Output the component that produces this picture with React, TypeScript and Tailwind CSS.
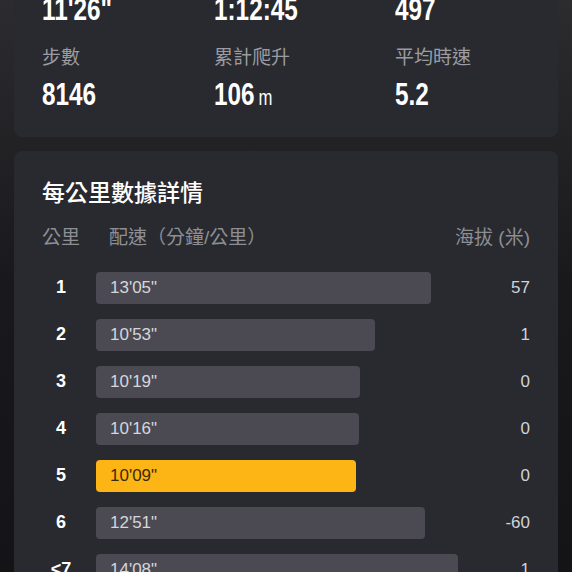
import React from "react";

const cjk = "font-['Liberation_Sans','Noto_Sans_CJK_TC',sans-serif]";
// no condensed face installed, so squeeze Liberation Sans bold
const big = "inline-block origin-left scale-x-[0.76] text-[32px] font-bold leading-none font-['Liberation_Sans',sans-serif]";

const summaryTop = ["11'26\"", "1:12:45", "497"];

const summary = [
  { label: "步數", value: "8146" },
  { label: "累計爬升", value: "106", unit: "m" },
  { label: "平均時速", value: "5.2" },
];

const rows = [
  { km: "1", pace: "13'05\"", sec: 785, alt: "57" },
  { km: "2", pace: "10'53\"", sec: 653, alt: "1" },
  { km: "3", pace: "10'19\"", sec: 619, alt: "0" },
  { km: "4", pace: "10'16\"", sec: 616, alt: "0" },
  { km: "5", pace: "10'09\"", sec: 609, alt: "0", best: true },
  { km: "6", pace: "12'51\"", sec: 771, alt: "-60" },
  { km: "<7", pace: "14'08\"", sec: 848, alt: "1" },
];

export default function App() {
  return (
    <div className="h-[572px] w-[572px] overflow-hidden bg-gradient-to-b from-[#2c2c2e] via-[#19191b] to-[#141416] px-[14px]">
      {/* summary card */}
      <div className="mt-[-27px] rounded-[8px] bg-[#282a30] pb-[26px] pl-[28px] pr-[28px] pt-[20px]">
        <div className="grid grid-cols-[172px_181px_1fr] text-white">
          {summaryTop.map((v) => (
            <div key={v}>
              <span className={big}>{v}</span>
            </div>
          ))}
        </div>
        <div className={`mt-[19px] grid grid-cols-[172px_181px_1fr] text-[19px] leading-[26px] text-[#9b9ca1] ${cjk}`}>
          {summary.map((s) => (
            <div key={s.label}>{s.label}</div>
          ))}
        </div>
        <div className="mt-[7px] grid grid-cols-[172px_181px_1fr] text-white">
          {summary.map((s) => (
            <div key={s.label}>
              <span className={big}>
                {s.value}
                {s.unit && <span className="ml-[5px] text-[22px] font-normal">{s.unit}</span>}
              </span>
            </div>
          ))}
        </div>
      </div>

      {/* per km card */}
      <div className="mt-[14px] rounded-[8px] bg-[#282a30] pl-[28px] pr-[28px] pt-[27px]">
        <div className={`text-[23px] font-medium leading-[30px] text-white ${cjk}`}>每公里數據詳情</div>
        <div className={`mt-[17px] flex text-[19px] leading-[26px] text-[#8e8f94] ${cjk}`}>
          <div className="w-[38px]">公里</div>
          <div className="ml-[29px]">配速（分鐘/公里）</div>
          <div className="ml-auto">海拔 (米)</div>
        </div>
        <div className="mt-[13px] flex flex-col">
          {rows.map((r) => (
            <div key={r.km} className="flex h-[47px] items-center font-['Liberation_Sans',sans-serif]">
              <div className="w-[38px] text-center text-[18px] font-bold text-white">{r.km}</div>
              <div className="ml-[16px] flex-1">
                <div
                  className={`flex h-[32px] items-center rounded-[4px] pl-[14px] text-[17px] ${
                    r.best ? "bg-[#fdb515] text-[#3b2a05]" : "bg-[#4b4a53] text-[#d6d6db]"
                  }`}
                  style={{ width: Math.round(r.sec * 0.4267) }}
                >
                  {r.pace}
                </div>
              </div>
              <div className="w-[60px] text-right text-[17px] text-[#d2d2d7]">{r.alt}</div>
            </div>
          ))}
        </div>
      </div>
    </div>
  );
}
